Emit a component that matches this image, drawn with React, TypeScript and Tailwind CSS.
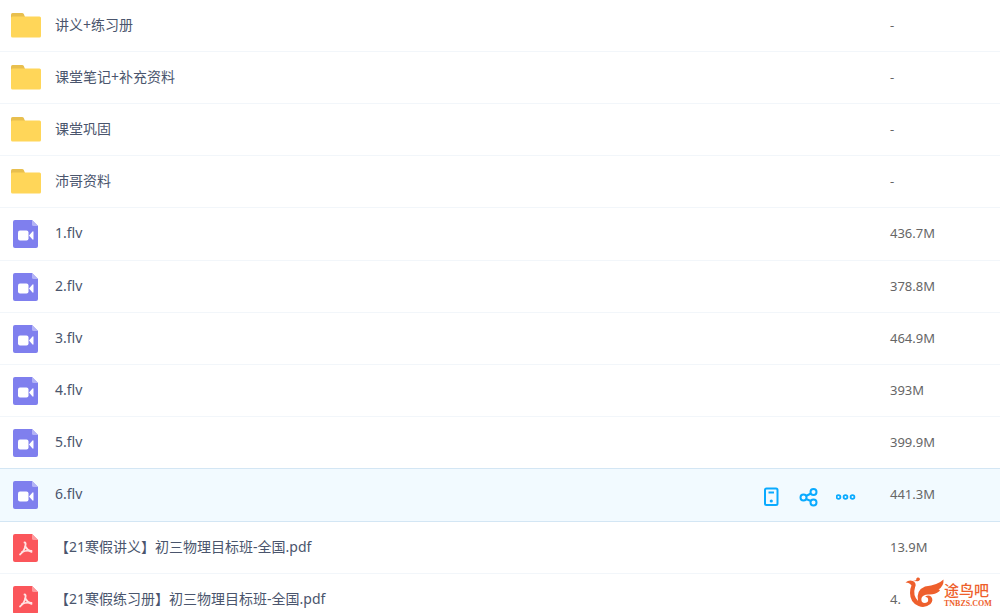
import { ReactNode } from 'react';

type Kind = 'folder' | 'video' | 'pdf';

interface FileItem {
  name: string;
  kind: Kind;
  size: string;
  active?: boolean;
  tall?: boolean;
}

const files: FileItem[] = [
  { name: '讲义+练习册', kind: 'folder', size: '-' },
  { name: '课堂笔记+补充资料', kind: 'folder', size: '-' },
  { name: '课堂巩固', kind: 'folder', size: '-' },
  { name: '沛哥资料', kind: 'folder', size: '-' },
  { name: '1.flv', kind: 'video', size: '436.7M', tall: true },
  { name: '2.flv', kind: 'video', size: '378.8M' },
  { name: '3.flv', kind: 'video', size: '464.9M' },
  { name: '4.flv', kind: 'video', size: '393M' },
  { name: '5.flv', kind: 'video', size: '399.9M' },
  { name: '6.flv', kind: 'video', size: '441.3M', active: true },
  { name: '【21寒假讲义】初三物理目标班-全国.pdf', kind: 'pdf', size: '13.9M' },
  { name: '【21寒假练习册】初三物理目标班-全国.pdf', kind: 'pdf', size: '4.' },
];

function FolderIcon() {
  return (
    <svg width="30" height="30" viewBox="0 0 30 30" aria-hidden="true">
      <path d="M0 10V3.500Q0 2 1.500 2H11Q12.300 2 12.800 3L14 6V10Z" fill="#e8bf4e" />
      <rect y="5.500" width="30" height="21" rx="1.500" fill="#ffd659" />
    </svg>
  );
}

function SheetIcon({ kind }: { kind: Kind }) {
  const isVideo = kind === 'video';
  return (
    <svg width="30" height="30" viewBox="0 0 30 30" aria-hidden="true">
      <path d="M4 1H21L27 7V27Q27 29 25 29H4Q2 29 2 27V3Q2 1 4 1Z" fill={isVideo ? '#7f7fee' : '#fb565b'} />
      <path d="M21 1L27 7H22.500Q21 7 21 5.500Z" fill={isVideo ? '#b3b3f6' : '#fd9a9d'} />
      {isVideo ? (
        <g fill="#fff">
          <rect x="7" y="11.500" width="10.500" height="10" rx="2" />
          <path d="M18 16.500L21.500 12.500Q22.500 12 22.500 13V20Q22.500 21 21.500 20.500Z" />
        </g>
      ) : (
        <g fill="none" stroke="#ffe3e3" strokeWidth="1.800" strokeLinecap="round">
          <path d="M13.500 9.500Q15 9.500 14.500 12Q14 17.500 9 21.500" />
          <path d="M14.300 13.500Q16 17 20.500 18.800" />
          <path d="M11 19Q15 17 20.500 17.800" />
        </g>
      )}
    </svg>
  );
}

function ActionButton({ label, children }: { label: string; children: ReactNode }) {
  return (
    <button type="button" aria-label={label} className="size-5 text-[#09aaff]">
      <svg width="20" height="20" viewBox="0 0 20 20" fill="none" stroke="currentColor" strokeWidth="2">
        {children}
      </svg>
    </button>
  );
}

function RowActions() {
  return (
    <div className="flex justify-end gap-[17px] pr-[34px] pt-1">
      <ActionButton label="发送到手机">
        <rect x="3" y="1.500" width="12.500" height="16.500" rx="1.500" />
        <path d="M6.500 5.500H12" />
        <circle cx="9.300" cy="14" r="1.600" fill="currentColor" stroke="none" />
      </ActionButton>
      <ActionButton label="分享">
        <circle cx="4.500" cy="10.500" r="3" />
        <circle cx="14.500" cy="5" r="3" />
        <circle cx="14.500" cy="15.500" r="3" />
        <path d="M7 9L12 6.500M7 12L12 14" />
      </ActionButton>
      <ActionButton label="更多">
        <g strokeWidth="1.800">
          <circle cx="2.500" cy="10" r="1.900" />
          <circle cx="9.500" cy="10" r="1.900" />
          <circle cx="16.500" cy="10" r="1.900" />
        </g>
      </ActionButton>
    </div>
  );
}

function FileRow({ file, beforeActive }: { file: FileItem; beforeActive: boolean }) {
  const line = file.active || beforeActive ? 'border-[#d3e6f4]' : 'border-[#f2f6fa]';
  const height = file.active || file.tall ? 'h-[53px]' : 'h-[52px]';
  const cell = `${height} ${line} border-b p-0 align-middle`;
  return (
    <tr className={file.active ? 'bg-[#f2faff]' : 'bg-white'}>
      <td className={cell}>
        <div className="flex items-center gap-3.5 pl-[11px]">
          {file.kind === 'folder' ? <FolderIcon /> : <SheetIcon kind={file.kind} />}
          <a href="#" className="pb-0.5 text-[14px] leading-5 text-[#4a556d]">
            {file.name}
          </a>
        </div>
      </td>
      <td className={cell}>{file.active && <RowActions />}</td>
      <td className={`${cell} text-[13px] leading-5 text-[#666]`}>
        <div className="pb-0.5">{file.size}</div>
      </td>
    </tr>
  );
}

function Watermark() {
  return (
    <div className="fixed bottom-0 right-0 flex w-[95px] items-end bg-white pb-1 text-[#ee5f2c]">
      <svg className="shrink-0" width="39" height="32" viewBox="0 0 39 32" fill="currentColor" aria-hidden="true">
        <path d="M0.500 5.500Q4 2.500 8 4Q12 6 10 10.500Q7.500 18 13 24Q11 13 20 9.500Q33 8 38.500 2.500Q39 9 33.500 12.500Q36 12.500 34 14.500Q30 18 23 17.500Q18 17.500 16.500 21Q15.500 26 20 26Q24 25.500 23 21.500Q22.500 19.500 20 20Q23 17.500 26 19.500Q29 23 25.500 27Q20 31.500 13.500 29Q5 25.500 5 16Q5 11.500 6.500 8.500Q4.500 5.500 0.500 5.500Z" />
        <path d="M8 3.500Q9.500 4.500 11 4Q14 5 15 2.500Q15 0 12.500 0.500Q10.800 1 11.200 3Q9.500 4 8 3.500Z" />
      </svg>
      <div className="whitespace-nowrap">
        <div className="text-[15px] font-medium leading-[17px]">途鸟吧</div>
        <div className="font-['Liberation_Serif',serif] text-[8px] font-bold leading-[10px]">TNBZS.COM</div>
      </div>
    </div>
  );
}

export default function App() {
  return (
    <main className="h-screen overflow-hidden bg-white font-['Noto_Sans','Noto_Sans_CJK_SC',sans-serif]">
      <table className="w-full table-fixed border-separate border-spacing-0">
        <colgroup>
          <col />
          <col className="w-[180px]" />
          <col className="w-[110px]" />
        </colgroup>
        <tbody>
          {files.map((file, i) => (
            <FileRow key={file.name} file={file} beforeActive={Boolean(files[i + 1]?.active)} />
          ))}
        </tbody>
      </table>
      <Watermark />
    </main>
  );
}
